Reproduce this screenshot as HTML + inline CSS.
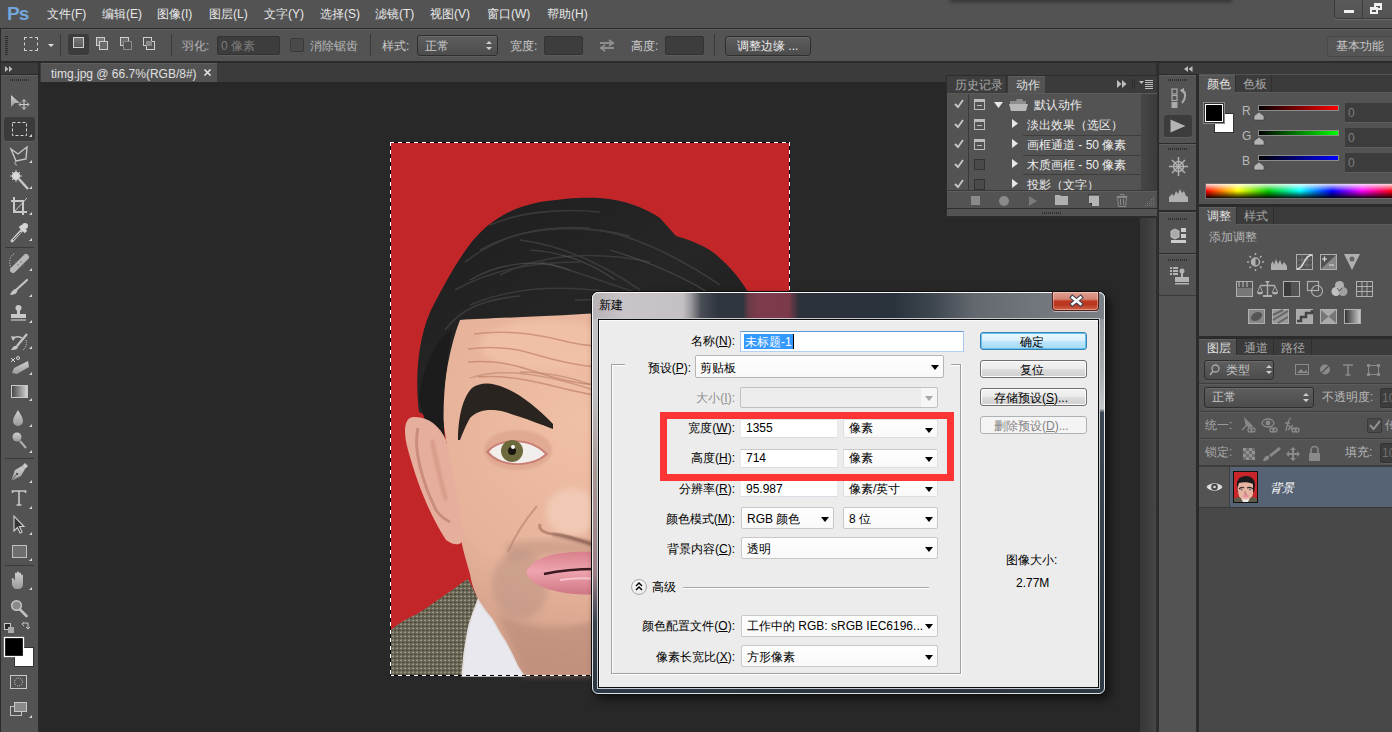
<!DOCTYPE html>
<html><head><meta charset="utf-8">
<style>
*{margin:0;padding:0;box-sizing:border-box}
html,body{width:1392px;height:732px;overflow:hidden;background:#535353;font-family:"Liberation Sans",sans-serif;font-size:12px;color:#d8d8d8}
.a{position:absolute}
.t{position:absolute;white-space:nowrap;line-height:14px}
.m{color:#e8e8e8;top:7px}
.o{color:#cacaca;top:39px}
.inp{position:absolute;background:#3d3d3d;border:1px solid #333;border-radius:2px;box-shadow:inset 0 1px 0 #3e3e3e,0 1px 0 #5c5c5c}
.btn{position:absolute;background:linear-gradient(#5e5e5e,#4c4c4c);border:1px solid #2e2e2e;border-radius:3px;box-shadow:inset 0 1px 0 #6a6a6a,0 1px 0 #5d5d5d}
svg{position:absolute;overflow:visible}
</style></head><body>
<!-- ============ MENU BAR ============ -->
<div class="a" style="left:950px;top:-6px;width:282px;height:8px;background:#2a2a2a;filter:blur(2px);opacity:.8"></div>
<div class="t" style="left:7px;top:4px;font-size:19px;line-height:20px;font-weight:bold;color:#72a6dc;letter-spacing:-0.8px">Ps</div>
<div class="t m" style="left:47px">文件(F)</div>
<div class="t m" style="left:102px">编辑(E)</div>
<div class="t m" style="left:157px">图像(I)</div>
<div class="t m" style="left:209px">图层(L)</div>
<div class="t m" style="left:264px">文字(Y)</div>
<div class="t m" style="left:320px">选择(S)</div>
<div class="t m" style="left:375px">滤镜(T)</div>
<div class="t m" style="left:430px">视图(V)</div>
<div class="t m" style="left:487px">窗口(W)</div>
<div class="t m" style="left:547px">帮助(H)</div>
<!-- window buttons -->
<div class="a" style="left:1334px;top:-3px;width:62px;height:22px;border:1px solid #3a3a3a;border-radius:0 0 0 4px;background:linear-gradient(#5a5a5a,#535353);box-shadow:0 1px 0 #6a6a6a"></div>
<div class="a" style="left:1362px;top:0;width:1px;height:18px;background:#3e3e3e"></div>
<div class="a" style="left:1344px;top:10px;width:10px;height:3px;background:#f0f0f0"></div>
<div class="a" style="left:1374px;top:3px;width:8px;height:7px;border:2px solid #f0f0f0;border-top-width:3px"></div>
<div class="a" style="left:1370px;top:7px;width:8px;height:7px;border:2px solid #f0f0f0;border-top-width:3px;background:#535353"></div>
<!-- ============ OPTIONS BAR ============ -->
<div class="a" style="left:0;top:28px;width:1392px;height:1px;background:#2a2a2a"></div>
<div class="a" style="left:0;top:29px;width:1392px;height:1px;background:#5f5f5f"></div>
<div class="a" style="left:0;top:29px;width:1px;height:33px;background:#2a2a2a"></div>
<div class="a" style="left:0;top:61px;width:1392px;height:2px;background:#2b2b2b"></div>
<!-- grip -->
<div class="a" style="left:5px;top:36px;width:3px;height:20px;background:repeating-linear-gradient(#2c2c2c 0 1px,transparent 1px 2px)"></div>
<!-- marquee icon -->
<div class="a" style="left:24px;top:37px;width:14px;height:14px;border:1px dashed #d0d0d0"></div>
<svg style="left:48px;top:44px" width="7" height="4"><path d="M0 0H6L3 3Z" fill="#e0e0e0"/></svg>
<div class="a" style="left:60px;top:34px;width:1px;height:22px;background:#3a3a3a"></div>
<!-- mode buttons -->
<div class="a" style="left:68px;top:34px;width:21px;height:21px;background:#3c3c3c;border-radius:3px;box-shadow:0 1px 0 #5c5c5c"></div>
<div class="a" style="left:73px;top:37px;width:11px;height:11px;border:1px solid #cfcfcf;background:linear-gradient(#777,#5a5a5a)"></div>
<div class="a" style="left:96px;top:37px;width:9px;height:9px;border:1px solid #cfcfcf;background:#777"></div>
<div class="a" style="left:99px;top:41px;width:9px;height:9px;border:1px solid #cfcfcf;background:#6a6a6a"></div>
<div class="a" style="left:120px;top:37px;width:9px;height:9px;border:1px solid #cfcfcf;background:#6a6a6a"></div>
<div class="a" style="left:123px;top:41px;width:9px;height:9px;border:1px solid #8a8a8a;background:#535353"></div>
<div class="a" style="left:143px;top:37px;width:9px;height:9px;border:1px solid #cfcfcf"></div>
<div class="a" style="left:146px;top:41px;width:9px;height:9px;border:1px solid #cfcfcf"></div>
<div class="a" style="left:146px;top:41px;width:6px;height:5px;background:#888"></div>
<div class="a" style="left:171px;top:34px;width:1px;height:22px;background:#3a3a3a"></div>
<div class="t o" style="left:182px;color:#b4b4b4">羽化:</div>
<div class="inp" style="left:217px;top:36px;width:63px;height:19px"></div>
<div class="t o" style="left:221px;top:39px;color:#7a7a7a">0 像素</div>
<div class="a" style="left:290px;top:38px;width:14px;height:14px;background:#4a4a4a;border:1px solid #3a3a3a;border-radius:2px"></div>
<div class="t o" style="left:310px;color:#b8b8b8">消除锯齿</div>
<div class="a" style="left:370px;top:34px;width:1px;height:22px;background:#3a3a3a"></div>
<div class="t o" style="left:382px">样式:</div>
<div class="btn" style="left:417px;top:35px;width:81px;height:21px"></div>
<div class="t o" style="left:425px">正常</div>
<svg style="left:486px;top:40px" width="6" height="11"><path d="M0 4L3 1L6 4ZM0 7L3 10L6 7Z" fill="#cfcfcf"/></svg>
<div class="t o" style="left:510px">宽度:</div>
<div class="inp" style="left:544px;top:36px;width:39px;height:19px"></div>
<svg style="left:599px;top:38px" width="16" height="14"><path d="M1 5H13M10 2L14 5L10 8M15 10H3M6 7L2 10L6 13" stroke="#8e8e8e" stroke-width="2" fill="none"/></svg>
<div class="t o" style="left:631px">高度:</div>
<div class="inp" style="left:665px;top:36px;width:39px;height:19px"></div>
<div class="a" style="left:714px;top:34px;width:1px;height:22px;background:#3a3a3a"></div>
<div class="btn" style="left:725px;top:36px;width:86px;height:20px"></div>
<div class="t o" style="left:737px;color:#ececec">调整边缘 ...</div>
<div class="btn" style="left:1327px;top:36px;width:70px;height:21px;background:#555;box-shadow:none;border-color:#484848"></div>
<div class="t o" style="left:1336px;color:#c8c8c8">基本功能</div>

<!-- ============ LEFT TOOLS ============ -->
<div class="a" style="left:0;top:63px;width:40px;height:669px;background:#2b2b2b"></div>
<div class="a" style="left:1px;top:63px;width:37px;height:11px;background:#3b3b3b"></div>
<svg style="left:5px;top:66px" width="8" height="6"><path d="M0 0L3.5 3L0 6ZM4 0L7.5 3L4 6Z" fill="#bbb"/></svg>
<div class="a" style="left:1px;top:75px;width:37px;height:657px;background:#535353;box-shadow:inset 0 1px 0 #606060"></div>
<div class="a" style="left:10px;top:79px;width:19px;height:2px;background:repeating-linear-gradient(90deg,#2e2e2e 0 1px,transparent 1px 2px)"></div>


<!-- tool icons -->
<div class="a" style="left:4px;top:117px;width:31px;height:24px;background:#3b3b3b;border-radius:3px;box-shadow:0 1px 0 #5e5e5e"></div>
<svg style="left:0;top:0" width="40" height="732" viewBox="0 0 40 732">
<defs>
<linearGradient id="tg" x1="0" y1="0" x2="0" y2="1"><stop offset="0" stop-color="#d0d0d0"/><stop offset="1" stop-color="#9a9a9a"/></linearGradient>
<linearGradient id="tg2" x1="0" y1="0" x2="1" y2="0"><stop offset="0" stop-color="#444"/><stop offset="1" stop-color="#d8d8d8"/></linearGradient>
</defs>
<g fill="#d8d8d8">
<!-- corner triangles -->
<path d="M29 137H32V134Z"/><path d="M29 163H32V160Z"/><path d="M29 189H32V186Z"/><path d="M29 215H32V212Z"/><path d="M29 241H32V238Z"/>
<path d="M29 271H32V268Z"/><path d="M29 297H32V294Z"/><path d="M29 323H32V320Z"/><path d="M29 349H32V346Z"/><path d="M29 375H32V372Z"/><path d="M29 401H32V398Z"/><path d="M29 427H32V424Z"/><path d="M29 453H32V450Z"/>
<path d="M29 483H32V480Z"/><path d="M29 509H32V506Z"/><path d="M29 535H32V532Z"/><path d="M29 561H32V558Z"/>
<path d="M29 590H32V587Z"/><path d="M29 718H32V715Z"/>
</g>
<!-- separators -->
<path d="M5 247.5H34M5 458.5H34M5 565.5H34" stroke="#3a3a3a" stroke-width="1"/>
<!-- move -->
<path d="M11 95L20 103L15 103L11 107Z" fill="url(#tg)"/>
<path d="M24 100V109M19.5 104.5H28.5" stroke="#d0d0d0" stroke-width="1.2"/><path d="M22 101.5L24 99.5L26 101.5M22 107.5L24 109.5L26 107.5M21 102.5L19 104.5L21 106.5M27 102.5L29 104.5L27 106.5" stroke="#d0d0d0" stroke-width="1" fill="none"/>
<!-- marquee -->
<rect x="12.5" y="122.5" width="14" height="13" fill="none" stroke="#d4d4d4" stroke-width="1" stroke-dasharray="3 2"/>
<!-- lasso -->
<path d="M11 149L18 154L27 147L26 159L16 161L11 149Z" fill="none" stroke="#c8c8c8" stroke-width="1.4"/><path d="M16 161C14 163 15 165 17 165" stroke="#c8c8c8" fill="none"/>
<!-- wand -->
<path d="M19 179L28 189" stroke="#c8c8c8" stroke-width="2.5"/><circle cx="16" cy="176" r="4" fill="#d8d8d8"/><path d="M16 170V182M10 176H22M12 172L20 180M20 172L12 180" stroke="#d8d8d8" stroke-width="1"/>
<!-- crop -->
<path d="M14 197V212H27M11 201H23V215" stroke="#c8c8c8" stroke-width="2" fill="none"/><path d="M14 212L27 198" stroke="#c8c8c8" stroke-width="1"/>
<!-- eyedropper -->
<path d="M12 241L22 230" stroke="#c8c8c8" stroke-width="3" stroke-linecap="round"/><path d="M20 226L26 232" stroke="#d4d4d4" stroke-width="3.5"/><circle cx="25" cy="226" r="3" fill="#d4d4d4"/><path d="M13 240L21 232" stroke="#535353" stroke-width="1"/>
<!-- heal -->
<path d="M13 270L26 257" stroke="#b8b8b8" stroke-width="6" stroke-linecap="round"/><circle cx="18" cy="265" r="0.8" fill="#777"/><circle cx="21" cy="262" r="0.8" fill="#777"/><circle cx="16" cy="262" r="0.8" fill="#777"/><circle cx="23" cy="265" r="0.8" fill="#777"/><path d="M14 254C9 256 8 266 13 270" stroke="#c8c8c8" stroke-dasharray="1 1.5" fill="none"/>
<!-- brush -->
<path d="M16 290L27 280" stroke="#c4c4c4" stroke-width="2.2" stroke-linecap="round"/><path d="M10 295C12 290 14 289 17 289C18 292 16 295 10 295Z" fill="#c4c4c4"/>
<!-- stamp -->
<circle cx="18.5" cy="308" r="3" fill="#c8c8c8"/><path d="M17 310H20V314H17Z" fill="#c8c8c8"/><path d="M11 314H26V318H11Z" fill="#c8c8c8"/><path d="M11 320H26" stroke="#c8c8c8" stroke-width="1.2"/>
<!-- history brush -->
<path d="M17 346L27 334" stroke="#c4c4c4" stroke-width="2.2"/><path d="M11 350C13 346 15 345 18 346C18 349 16 350 11 350Z" fill="#c4c4c4"/><path d="M22 338C18 336 15 336 12 339" stroke="#c4c4c4" stroke-width="1.5" fill="none"/><path d="M11 336L13 341L16 337Z" fill="#c4c4c4"/><path d="M26 340C27 344 26 348 23 350" stroke="#c4c4c4" stroke-dasharray="1 1" fill="none"/>
<!-- eraser -->
<path d="M14 368L28 361L29 367L17 374L12 373Z" fill="url(#tg)"/><path d="M11 358L15 362M15 358L11 362" stroke="#d4d4d4" stroke-width="1"/><circle cx="18" cy="358" r="1.5" fill="none" stroke="#d4d4d4"/>
<!-- gradient -->
<rect x="11.5" y="385.5" width="16" height="12" fill="url(#tg2)" stroke="#c8c8c8"/>
<!-- blur drop -->
<path d="M18 410C15 415 13 418 13 421A5 5 0 0 0 23 421C23 418 21 415 18 410Z" fill="url(#tg)"/>
<!-- dodge -->
<circle cx="17" cy="437" r="4.5" fill="url(#tg)"/><path d="M20 441L26 448" stroke="#b0b0b0" stroke-width="2"/>
<!-- pen -->
<path d="M11 481L15 470L22 466L25 469L21 476Z" fill="url(#tg)"/><path d="M22 466L25 463L28 466L25 469Z" fill="#c8c8c8"/><circle cx="17" cy="474" r="1" fill="#333"/><path d="M11 481L16 475" stroke="#333" stroke-width="0.6"/>
<!-- type -->
<path d="M12.5 493V491H25.5V493M19 491V505M16.5 505H21.5" stroke="#c8c8c8" stroke-width="1.6" fill="none"/>
<!-- path select -->
<path d="M14 516V531L17.5 527.5L20 533L22 532L19.5 526.5H24Z" fill="#333" stroke="#d0d0d0" stroke-width="1.1"/>
<!-- shape -->
<rect x="12.5" y="545.5" width="14" height="12" fill="#6e6e6e" stroke="#c0c0c0"/>
<!-- hand -->
<path d="M12 581C11 578 13 577 14 579L15 581V574C15 572 17 572 17 574V580V573C17 571 19 571 19 573V580V574C19 572 21 572 21 574V581V576C21 574 23 574 23 576V584C23 587 21 589 18 589H16C14 589 13 587 12 585Z" fill="url(#tg)"/>
<!-- zoom -->
<circle cx="16.5" cy="605.5" r="4.8" fill="#8a8a8a" stroke="#c8c8c8" stroke-width="1.5"/><path d="M20 609.5L26.5 616" stroke="#c0c0c0" stroke-width="2.6" stroke-linecap="round"/>
<!-- small swatches -->
<rect x="4.5" y="623.5" width="6" height="6" fill="#2a2a2a" stroke="#c8c8c8"/><rect x="8" y="627" width="6" height="6" fill="#aaa"/>
<path d="M23 623H28V628" stroke="#c8c8c8" fill="none"/><path d="M22 624L24 622M22 624L24 626M28 629L26 627M28 629L30 627" stroke="#c8c8c8" fill="none"/>
<!-- fg bg -->
<rect x="14.5" y="647.5" width="19" height="19" fill="#fff" stroke="#333"/>
<rect x="4.5" y="637.5" width="19" height="19" fill="#000" stroke="#fff" stroke-width="1.3"/>
<!-- quick mask -->
<rect x="10.5" y="675.5" width="16" height="13" fill="none" stroke="#c8c8c8"/><circle cx="18.5" cy="682" r="4" fill="none" stroke="#d8d8d8" stroke-dasharray="1 1.2"/>
<!-- screen mode -->
<rect x="10.5" y="706.5" width="11" height="9" fill="#535353" stroke="#c0c0c0"/><rect x="14.5" y="702.5" width="12" height="9" fill="#8a8a8a" stroke="#c8c8c8"/>
</svg>

<!-- ============ TAB STRIP + CANVAS ============ -->
<div class="a" style="left:40px;top:63px;width:1118px;height:19px;background:#3b3b3b"></div>
<div class="a" style="left:41px;top:63px;width:176px;height:19px;background:#535353;box-shadow:inset 0 1px 0 #5f5f5f"></div>
<div class="t" style="left:51px;top:67px;color:#e0e0e0;font-size:12px">timg.jpg @ 66.7%(RGB/8#)</div>
<svg style="left:204px;top:69px" width="7" height="7"><path d="M0.5 0.5L6.5 6.5M6.5 0.5L0.5 6.5" stroke="#e8e8e8" stroke-width="1.6"/></svg>
<div class="a" style="left:40px;top:82px;width:1118px;height:650px;background:#282828"></div>

<!-- ============ PHOTO ============ -->
<svg style="left:391px;top:143px" width="398" height="532" viewBox="391 143 398 532">
<defs>
<radialGradient id="skin" cx="0.4" cy="0.3" r="0.8"><stop offset="0" stop-color="#f0c0a6"/><stop offset="0.55" stop-color="#e6b29a"/><stop offset="1" stop-color="#c4927e"/></radialGradient>
<linearGradient id="hairg" x1="0" y1="0" x2="1" y2="1"><stop offset="0" stop-color="#1e1e1e"/><stop offset="0.5" stop-color="#262626"/><stop offset="1" stop-color="#161616"/></linearGradient>
<pattern id="tweed" width="4" height="4" patternUnits="userSpaceOnUse"><rect width="4" height="4" fill="#6a6656"/><rect width="2" height="1" fill="#9a9480"/><rect x="2" y="2" width="2" height="1" fill="#45423a"/><rect x="1" y="3" width="1" height="1" fill="#8a8470"/></pattern>
<linearGradient id="lip" x1="0" y1="0" x2="0" y2="1"><stop offset="0" stop-color="#d9808c"/><stop offset="0.45" stop-color="#eea4ae"/><stop offset="1" stop-color="#cf7684"/></linearGradient>
<filter id="bl"><feGaussianBlur stdDeviation="3"/></filter>
<filter id="bl1"><feGaussianBlur stdDeviation="1"/></filter><filter id="bl05"><feGaussianBlur stdDeviation="0.6"/></filter>
</defs>
<rect x="391" y="143" width="398" height="532" fill="#c32628"/>
<path d="M478 595 L600 560 L600 676 L470 676 Z" fill="#c89a88"/>
<!-- hair -->
<path d="M419 412 C414 370 420 330 434 304 C448 278 465 245 486 227 C505 212 520 206 540 202 C565 198 585 197 600 198 C625 200 645 208 660 218 L676 236 C700 243 712 250 722 260 C735 272 745 285 752 300 L770 430 L600 430 L470 440 Z" fill="url(#hairg)"/>
<g stroke="#4a4a4a" stroke-width="1.6" fill="none" opacity="0.6" filter="url(#bl05)">
<path d="M465 262 C500 235 540 225 590 228"/><path d="M480 250 C520 228 570 222 630 236"/><path d="M500 275 C540 255 590 250 650 262"/>
<path d="M455 290 C490 270 530 262 580 262"/><path d="M520 240 C560 245 600 262 640 290"/><path d="M540 262 C575 270 610 285 660 300"/>
<path d="M470 305 C510 288 560 285 610 292"/><path d="M600 230 C640 238 680 258 720 285"/><path d="M575 300 C620 300 660 290 700 300"/>
<path d="M445 330 C460 310 480 300 520 296"/><path d="M490 225 C520 212 560 208 600 212"/>
</g>
<g stroke="#5a5a5a" stroke-width="1.2" fill="none" opacity="0.6" filter="url(#bl05)">
<path d="M530 250 C560 252 590 262 615 280"/><path d="M470 280 C500 262 540 258 570 270"/><path d="M610 250 C650 262 690 280 720 300"/>
</g>
<!-- face skin -->
<path d="M460 320 C490 318 540 317 600 313 L792 320 L792 676 L524 676 C515 655 510 648 505 641 C500 632 495 625 492 619 C485 612 480 606 478 600 C474 590 471 582 470 574 C466 560 463 550 462 544 C455 500 446 440 442 412 C444 380 450 345 460 320 Z" fill="url(#skin)"/>
<!-- forehead light -->
<ellipse cx="545" cy="345" rx="65" ry="24" fill="#f2c4aa" opacity="0.7" filter="url(#bl)"/>
<g stroke="#c2806a" stroke-width="1.5" fill="none" opacity="0.7" filter="url(#bl05)">
<path d="M474 334 C500 330 530 333 560 340 C575 344 590 346 600 346"/>
<path d="M468 349 C490 346 510 347 530 353 C550 359 575 366 600 367"/>
<path d="M468 362 C490 360 510 363 530 370 C550 377 575 384 600 385"/>
<path d="M478 377 C500 375 520 378 545 384 C565 389 585 394 600 396"/>
</g>
<!-- sideburn -->
<path d="M419 400 C420 380 432 340 452 330 C447 360 442 400 444 430 C446 450 448 462 450 470 L440 470 C436 450 432 430 426 424 Z" fill="#1c1c1c"/>
<!-- eyebrow -->
<path d="M458 440 C458 420 462 398 472 388 C480 382 492 382 505 388 C520 394 538 408 553 424 L553 429 C540 424 525 418 505 412 C490 408 478 410 470 418 C466 425 463 432 460 440 Z" fill="#2a2420"/>
<path d="M470 378 C500 368 540 372 600 392 M520 372 C550 372 580 380 600 388" stroke="#c08a74" stroke-width="1.3" fill="none" opacity="0.7"/>
<!-- ear -->
<path d="M413 417 C404 418 403 432 408 450 C418 486 430 515 446 540 C454 546 462 546 464 538 C460 505 452 470 446 440 C440 426 428 416 413 417 Z" fill="#e6ae9c"/>
<path d="M418 428 C413 448 422 482 436 510 C440 516 446 520 450 522" stroke="#b87868" stroke-width="3" fill="none" opacity="0.6" filter="url(#bl05)"/><path d="M432 440 C436 460 440 480 446 500" stroke="#c88a78" stroke-width="4" fill="none" opacity="0.5" filter="url(#bl1)"/>
<!-- under-eye / eye socket -->
<ellipse cx="518" cy="450" rx="34" ry="20" fill="#d89c88" opacity="0.55" filter="url(#bl1)"/>
<path d="M486 452 C495 438 530 434 548 454 C535 468 500 470 486 452 Z" fill="#c87e74"/>
<path d="M489 452 C498 440 528 437 545 454 C532 466 502 467 489 452 Z" fill="#f2eeec"/>
<circle cx="512" cy="451" r="11" fill="#6c6a3c"/>
<circle cx="512" cy="451" r="4" fill="#1a1410"/>
<circle cx="513" cy="447" r="2" fill="#fff"/>
<!-- nose -->
<ellipse cx="572" cy="512" rx="26" ry="24" fill="#f2cab6" opacity="0.9" filter="url(#bl)"/>
<path d="M540 524 C538 530 545 534 556 534 C570 536 585 542 596 546" stroke="#9a6658" stroke-width="3" fill="none" opacity="0.55" filter="url(#bl05)"/>
<path d="M552 536 C570 540 585 545 596 548 L596 542 C580 538 565 534 552 534 Z" fill="#6a4a40" opacity="0.45" filter="url(#bl1)"/>
<path d="M537 506 C525 520 515 535 508 552" stroke="#b88070" stroke-width="2" fill="none" opacity="0.6" filter="url(#bl05)"/>
<!-- stubble / jaw shadow -->
<path d="M505 545 C530 536 570 540 596 545 L596 556 C560 552 530 556 510 562 Z" fill="#a88070" opacity="0.35" filter="url(#bl)"/>
<ellipse cx="520" cy="585" rx="28" ry="35" fill="#bc9484" opacity="0.55" filter="url(#bl)"/>
<path d="M497 614 C530 630 570 630 596 620 L596 676 L524 676 C515 650 505 630 497 614 Z" fill="#b88a78" opacity="0.6" filter="url(#bl)"/>
<!-- lips -->
<path d="M527 570 C535 556 560 550 596 552 L596 594 C575 596 552 592 538 585 C530 580 525 576 527 570 Z" fill="url(#lip)"/>
<path d="M544 574 C558 571 578 569 596 569" stroke="#3a1a20" stroke-width="2.6" fill="none"/>
<path d="M560 580 C572 578 585 578 596 579" stroke="#f8d0d6" stroke-width="2" fill="none" opacity="0.8"/>
<!-- jacket -->
<path d="M391 630 C400 622 410 617 417 614 C430 606 443 596 455 588 C460 584 464 581 468 579 C472 586 476 594 478 600 C474 610 470 620 468 630 C465 645 463 660 462 676 L391 676 Z" fill="url(#tweed)"/>
<!-- shirt collar -->
<path d="M478 600 C483 608 487 614 492 619 C497 628 501 636 505 641 C510 650 515 660 518 667 L524 676 L462 676 C463 660 465 645 468 630 C470 620 474 610 478 600 Z" fill="#e8e8ee" stroke="#e0dcdc" stroke-width="1.5"/>
</svg>
<!-- marching ants -->
<div class="a" style="left:390px;top:142px;width:400px;height:1px;background:repeating-linear-gradient(90deg,#fff 0 4px,#000 4px 8px)"></div>
<div class="a" style="left:390px;top:675px;width:400px;height:1px;background:repeating-linear-gradient(90deg,#fff 0 4px,#000 4px 8px)"></div>
<div class="a" style="left:390px;top:142px;width:1px;height:534px;background:repeating-linear-gradient(#fff 0 4px,#000 4px 8px)"></div>
<div class="a" style="left:789px;top:142px;width:1px;height:534px;background:repeating-linear-gradient(#fff 0 4px,#000 4px 8px)"></div>
<!-- right canvas lighter column -->
<div class="a" style="left:1140px;top:82px;width:16px;height:650px;background:linear-gradient(90deg,#383838,#3c3c3c 40%,#464646)"></div>
<div class="a" style="left:1156px;top:63px;width:3px;height:669px;background:#2e2e2e"></div>


<!-- ============ ACTIONS FLOATING PANEL ============ -->
<style>
.pt{position:absolute;white-space:nowrap;line-height:14px;font-size:12px;color:#d4d4d4}
.ck{position:absolute;width:9px;height:8px}
</style>
<div class="a" style="left:946px;top:75px;width:211px;height:143px;background:#2c2c2c"></div>
<div class="a" style="left:947px;top:76px;width:210px;height:17px;background:#3b3b3b"></div>
<div class="a" style="left:947px;top:76px;width:60px;height:16px;background:#3e3e3e;box-shadow:inset -1px 0 0 #2c2c2c"></div>
<div class="pt" style="left:955px;top:78px;color:#a8a8a8">历史记录</div>
<div class="a" style="left:1008px;top:76px;width:37px;height:18px;background:#535353;box-shadow:inset 0 1px 0 #5e5e5e"></div>
<div class="pt" style="left:1016px;top:78px;color:#e0e0e0">动作</div>
<svg style="left:1117px;top:80px" width="10" height="8"><path d="M0 0L4.5 4L0 8ZM5 0L9.5 4L5 8Z" fill="#bdbdbd"/></svg>
<div class="a" style="left:1132px;top:79px;width:1px;height:10px;background:#2e2e2e"></div>
<div class="a" style="left:1134px;top:79px;width:1px;height:10px;background:#2e2e2e"></div>
<svg style="left:1139px;top:80px" width="15" height="9"><path d="M0 1H5L2.5 4Z" fill="#bdbdbd"/><path d="M6 0.5H14M6 2.5H14M6 4.5H14M6 6.5H14M6 8.5H14" stroke="#bdbdbd" stroke-width="1"/></svg>
<div class="a" style="left:947px;top:93px;width:210px;height:1px;background:#5b5b5b"></div>
<div class="a" style="left:947px;top:94px;width:210px;height:97px;background:#535353"></div>
<div class="a" style="left:968px;top:94px;width:1px;height:97px;background:#3a3a3a"></div>
<div class="a" style="left:1141px;top:94px;width:16px;height:97px;background:linear-gradient(90deg,#464646,#3c3c3c)"></div>
<div class="a" style="left:1023px;top:135px;width:118px;height:1px;background:#3e3e3e"></div>
<div class="a" style="left:1023px;top:155px;width:118px;height:1px;background:#3e3e3e"></div>
<div class="a" style="left:1023px;top:174px;width:118px;height:1px;background:#3e3e3e"></div>
<!-- checks -->
<svg style="left:954px;top:99px" width="10" height="90"><g fill="none" stroke="#c8c8c8" stroke-width="1.8"><path d="M1 5L4 8L9 1"/><path d="M1 25L4 28L9 21"/><path d="M1 45L4 48L9 41"/><path d="M1 65L4 68L9 61"/><path d="M1 85L4 88L9 81"/></g></svg>
<!-- dialog toggles -->
<div class="a" style="left:974px;top:99px;width:11px;height:11px;border:1px solid #bcbcbc;box-shadow:inset 0 2px 0 #bcbcbc"></div><div class="a" style="left:977px;top:105px;width:5px;height:1px;background:#bcbcbc"></div>
<div class="a" style="left:974px;top:119px;width:11px;height:11px;border:1px solid #bcbcbc;box-shadow:inset 0 2px 0 #bcbcbc"></div><div class="a" style="left:977px;top:125px;width:5px;height:1px;background:#bcbcbc"></div>
<div class="a" style="left:974px;top:139px;width:11px;height:11px;border:1px solid #bcbcbc;box-shadow:inset 0 2px 0 #bcbcbc"></div><div class="a" style="left:977px;top:145px;width:5px;height:1px;background:#bcbcbc"></div>
<div class="a" style="left:974px;top:159px;width:11px;height:11px;border:1px solid #333;background:#4a4a4a"></div>
<div class="a" style="left:974px;top:179px;width:11px;height:11px;border:1px solid #333;background:#4a4a4a"></div>
<svg style="left:994px;top:102px" width="10" height="7"><path d="M0 0H9L4.5 6Z" fill="#e8e8e8"/></svg>
<svg style="left:1009px;top:98px" width="20" height="14"><path d="M1 3H7L8 1H13L14 3H17V6H1Z" fill="#8e8e8e"/><path d="M0 6H19L17 13H2Z" fill="#b8b8b8"/></svg>
<div class="pt" style="left:1034px;top:98px;color:#ececec">默认动作</div>
<svg style="left:1012px;top:119px" width="7" height="70"><g fill="#e8e8e8"><path d="M0 0L6 4.5L0 9Z"/><path d="M0 20L6 24.5L0 29Z"/><path d="M0 40L6 44.5L0 49Z"/><path d="M0 60L6 64.5L0 69Z"/></g></svg>
<div class="pt" style="left:1027px;top:118px;color:#ececec">淡出效果（选区）</div>
<div class="pt" style="left:1027px;top:138px;color:#ececec">画框通道 - 50 像素</div>
<div class="pt" style="left:1027px;top:158px;color:#ececec">木质画框 - 50 像素</div>
<div class="a" style="left:947px;top:178px;width:194px;height:13px;overflow:hidden"><div class="pt" style="left:80px;top:0px;color:#ececec">投影（文字）</div></div>
<!-- bottom toolbar -->
<div class="a" style="left:947px;top:190px;width:210px;height:19px;background:#535353;box-shadow:inset 0 1px 0 #3a3a3a,inset 0 2px 0 #5e5e5e,inset 0 -1px 0 #2e2e2e"></div>
<div class="a" style="left:971px;top:196px;width:9px;height:9px;background:#8a8a8a"></div>
<div class="a" style="left:999px;top:196px;width:10px;height:10px;border-radius:50%;background:#8a8a8a"></div>
<svg style="left:1029px;top:196px" width="9" height="10"><path d="M0 0L8 5L0 10Z" fill="#7a7a7a"/></svg>
<svg style="left:1055px;top:194px" width="14" height="11"><path d="M0 1H5L6 2H13V11H0Z" fill="#b0b0b0"/></svg>
<svg style="left:1088px;top:195px" width="12" height="12"><path d="M1 0H11V11H4L1 8Z" fill="#b4b4b4"/><path d="M1 8H4V11Z" fill="#2a2a2a"/><path d="M0 0H11" stroke="#2a2a2a" stroke-width="1"/></svg>
<svg style="left:1116px;top:194px" width="12" height="13"><path d="M0.5 2.5H11.5M4 0.5H8V2.5M1.5 3.5H10.5L9.5 12.5H2.5Z" stroke="#8a8a8a" stroke-width="1" fill="none"/><path d="M4.5 5V11M7.5 5V11" stroke="#8a8a8a"/></svg>
<svg style="left:1145px;top:197px" width="10" height="10"><g fill="#7a7a7a"><rect x="8" y="0" width="1" height="1"/><rect x="6" y="2" width="1" height="1"/><rect x="8" y="2" width="1" height="1"/><rect x="4" y="4" width="1" height="1"/><rect x="6" y="4" width="1" height="1"/><rect x="8" y="4" width="1" height="1"/><rect x="2" y="6" width="1" height="1"/><rect x="4" y="6" width="1" height="1"/><rect x="6" y="6" width="1" height="1"/><rect x="8" y="6" width="1" height="1"/><rect x="0" y="8" width="1" height="1"/><rect x="2" y="8" width="1" height="1"/><rect x="4" y="8" width="1" height="1"/><rect x="6" y="8" width="1" height="1"/><rect x="8" y="8" width="1" height="1"/></g></svg>
<div class="a" style="left:947px;top:209px;width:210px;height:7px;background:#535353"></div>
<div class="a" style="left:1042px;top:212px;width:19px;height:2px;background:repeating-linear-gradient(90deg,#2e2e2e 0 1px,transparent 1px 2px)"></div>

<!-- ============ NARROW ICON COLUMN ============ -->
<div class="a" style="left:1158px;top:63px;width:41px;height:669px;background:#2b2b2b"></div>
<div class="a" style="left:1159px;top:63px;width:234px;height:11px;background:#3b3b3b"></div>
<svg style="left:1184px;top:66px" width="9" height="6"><path d="M4 0L0 3L4 6ZM8.5 0L4.5 3L8.5 6Z" fill="#bbb"/></svg>
<div class="a" style="left:1159px;top:75px;width:37px;height:68px;background:#535353;box-shadow:inset 0 1px 0 #5f5f5f"></div>
<div class="a" style="left:1168px;top:79px;width:19px;height:2px;background:repeating-linear-gradient(90deg,#2e2e2e 0 1px,transparent 1px 2px)"></div>
<svg style="left:1171px;top:88px" width="18" height="20"><rect x="1" y="1" width="5" height="5" fill="none" stroke="#aaa" stroke-width="1.2"/><rect x="1" y="7.5" width="5" height="5" fill="none" stroke="#aaa" stroke-width="1.2"/><rect x="0.5" y="14" width="6" height="6" fill="#aaa"/><path d="M10 3H12C15 4 15 11 11 15" stroke="#aaa" stroke-width="2" fill="none"/><path d="M9 2L13 0V6Z" fill="#aaa"/></svg>
<div class="a" style="left:1164px;top:115px;width:28px;height:22px;background:#3c3c3c;border-radius:3px;box-shadow:0 1px 0 #5e5e5e"></div>
<svg style="left:1170px;top:119px" width="16" height="14"><path d="M0.5 0.5L15.5 7L0.5 13.5Z" fill="#b4b4b4"/></svg>
<div class="a" style="left:1159px;top:144px;width:37px;height:66px;background:#535353;box-shadow:inset 0 1px 0 #5f5f5f"></div>
<div class="a" style="left:1168px;top:148px;width:19px;height:2px;background:repeating-linear-gradient(90deg,#2e2e2e 0 1px,transparent 1px 2px)"></div>
<svg style="left:1169px;top:157px" width="19" height="19"><g stroke="#b0b0b0" stroke-width="1.5" fill="none"><circle cx="9.5" cy="9.5" r="5"/><path d="M9.5 0V19M0 9.5H19M3 3L16 16M16 3L3 16"/></g></svg>
<svg style="left:1169px;top:188px" width="19" height="14"><path d="M0 14V9L3 6L5 8L7 3L9 6L11 1L13 5L15 3L17 8L19 9V14Z" fill="#b0b0b0"/></svg>
<div class="a" style="left:1159px;top:212px;width:37px;height:41px;background:#535353;box-shadow:inset 0 1px 0 #5f5f5f"></div>
<div class="a" style="left:1168px;top:218px;width:19px;height:2px;background:repeating-linear-gradient(90deg,#2e2e2e 0 1px,transparent 1px 2px)"></div>
<svg style="left:1170px;top:227px" width="17" height="17"><path d="M1 4L5 2L9 4V10L5 12L1 10Z" fill="#aaa" stroke="#ccc" stroke-width="0.8"/><rect x="11" y="1" width="5" height="4" fill="#ccc"/><rect x="11" y="7" width="5" height="4" fill="#ccc"/><rect x="1" y="13" width="15" height="3" fill="#ccc"/></svg>
<div class="a" style="left:1159px;top:254px;width:37px;height:478px;background:#535353;box-shadow:inset 0 1px 0 #5f5f5f"></div>
<div class="a" style="left:1168px;top:259px;width:19px;height:2px;background:repeating-linear-gradient(90deg,#2e2e2e 0 1px,transparent 1px 2px)"></div>
<svg style="left:1170px;top:267px" width="19" height="18"><g fill="#b4b4b4"><rect x="0" y="0" width="2" height="2"/><rect x="0" y="3" width="2" height="2"/><rect x="0" y="6" width="2" height="2"/><rect x="3" y="0" width="5" height="2"/><rect x="3" y="3" width="5" height="2"/><rect x="3" y="6" width="5" height="2"/><circle cx="12" cy="4" r="2.5"/><rect x="11" y="5" width="2" height="5"/><rect x="5" y="10" width="14" height="5"/><rect x="5" y="16" width="14" height="1.5"/></g></svg>
<div class="a" style="left:1159px;top:295px;width:37px;height:1px;background:#3a3a3a"></div>

<!-- ============ RIGHT PANELS ============ -->
<div class="a" style="left:1199px;top:75px;width:193px;height:130px;background:#535353"></div>
<div class="a" style="left:1199px;top:75px;width:193px;height:17px;background:#3b3b3b"></div>
<div class="a" style="left:1199px;top:75px;width:36px;height:18px;background:#535353;box-shadow:inset 0 1px 0 #5f5f5f"></div>
<div class="pt" style="left:1207px;top:77px;color:#e0e0e0">颜色</div>
<div class="a" style="left:1235px;top:75px;width:1px;height:17px;background:#2e2e2e"></div>
<div class="pt" style="left:1243px;top:77px;color:#a8a8a8">色板</div>
<div class="a" style="left:1271px;top:75px;width:1px;height:17px;background:#2e2e2e"></div>
<div class="a" style="left:1235px;top:92px;width:157px;height:1px;background:#5b5b5b"></div>
<div class="a" style="left:1214px;top:113px;width:20px;height:20px;background:#fff;border:1px solid #333"></div>
<div class="a" style="left:1203px;top:102px;width:22px;height:22px;border:1px solid #8a8a8a;background:#000;box-shadow:inset 0 0 0 1px #333,inset 0 0 0 2px #fff"></div>
<div class="pt" style="left:1242px;top:104px;color:#b8b8b8">R</div>
<div class="pt" style="left:1242px;top:129px;color:#b8b8b8">G</div>
<div class="pt" style="left:1242px;top:154px;color:#b8b8b8">B</div>
<div class="a" style="left:1258px;top:105px;width:81px;height:6px;border:1px solid #8c8c8c;background:linear-gradient(90deg,#000,#f00)"></div>
<div class="a" style="left:1258px;top:130px;width:81px;height:6px;border:1px solid #8c8c8c;background:linear-gradient(90deg,#000,#0f0)"></div>
<div class="a" style="left:1258px;top:155px;width:81px;height:6px;border:1px solid #8c8c8c;background:linear-gradient(90deg,#000,#00f)"></div>
<svg style="left:1253px;top:112px" width="12" height="60"><g fill="#b4b4b4" stroke="#3a3a3a" stroke-width="0.6"><path d="M6 0L11 4V8H1V4Z"/><path d="M6 25L11 29V33H1V29Z"/><path d="M6 50L11 54V58H1V54Z"/></g></svg>
<div class="a" style="left:1345px;top:103px;width:50px;height:19px;background:#3c3c3c;box-shadow:0 1px 0 #5e5e5e"></div>
<div class="a" style="left:1345px;top:128px;width:50px;height:19px;background:#3c3c3c;box-shadow:0 1px 0 #5e5e5e"></div>
<div class="a" style="left:1345px;top:153px;width:50px;height:19px;background:#3c3c3c;box-shadow:0 1px 0 #5e5e5e"></div>
<div class="pt" style="left:1348px;top:106px;color:#7e7e7e">0</div>
<div class="pt" style="left:1348px;top:131px;color:#7e7e7e">0</div>
<div class="pt" style="left:1348px;top:156px;color:#7e7e7e">0</div>
<div class="a" style="left:1205px;top:183px;width:190px;height:16px;border:1px solid #6e6e6e;background:linear-gradient(rgba(255,255,255,.85) 0,rgba(255,255,255,0) 50%,rgba(0,0,0,0) 50%,rgba(0,0,0,.9) 100%),linear-gradient(90deg,#f00 0,#ff0 17%,#0c0 33%,#0ff 50%,#00f 67%,#f0f 83%,#f00 100%)"></div>
<div class="a" style="left:1199px;top:204px;width:193px;height:3px;background:#2b2b2b"></div>
<!-- adjustments -->
<div class="a" style="left:1199px;top:207px;width:193px;height:129px;background:#535353"></div>
<div class="a" style="left:1199px;top:207px;width:193px;height:17px;background:#3b3b3b"></div>
<div class="a" style="left:1199px;top:207px;width:37px;height:18px;background:#535353;box-shadow:inset 0 1px 0 #5f5f5f"></div>
<div class="pt" style="left:1207px;top:209px;color:#e0e0e0">调整</div>
<div class="a" style="left:1236px;top:207px;width:1px;height:17px;background:#2e2e2e"></div>
<div class="pt" style="left:1244px;top:209px;color:#a8a8a8">样式</div>
<div class="a" style="left:1273px;top:207px;width:1px;height:17px;background:#2e2e2e"></div>
<div class="a" style="left:1236px;top:224px;width:156px;height:1px;background:#5b5b5b"></div>
<div class="pt" style="left:1209px;top:230px;color:#b4b4b4">添加调整</div>
<svg style="left:1236px;top:253px" width="140" height="72">
<g fill="#b0b0b0" stroke="#b0b0b0">
<!-- row1 -->
<circle cx="19.5" cy="9" r="4" fill="none" stroke-width="1.5"/><path d="M19.5 5V13A4 4 0 0 1 19.5 5Z" stroke="none"/>
<path d="M19.5 0V2M19.5 16V18M11 9H13M26 9H28M13.5 3L15 4.5M24 13.5L25.5 15M25.5 3L24 4.5M15 13.5L13.5 15" stroke-width="1.5"/>
<path d="M35 17V11L37 8L38 12L40 6L42 11L44 7L46 12L48 9L51 13V17Z" stroke="none"/>
<rect x="60.5" y="1.5" width="16" height="15" fill="none" stroke-width="1"/><path d="M60 7H77M60 12H77M66 1V17M71 1V17" stroke-width="0.6" stroke="#888"/><path d="M61 16C68 16 68 2 76 2" fill="none" stroke-width="1.5" stroke="#ddd"/>
<rect x="84.5" y="1.5" width="16" height="15" fill="none" stroke-width="1"/><path d="M85 16L100 2V16Z" stroke="none" fill="#888"/><path d="M86 6H91M88.5 3.5V8.5M93 12H98" stroke-width="1.2" stroke="#e0e0e0"/>
<path d="M108 1H124L116 17Z" stroke="none"/><circle cx="116" cy="6" r="2.5" fill="#666" stroke="none"/>
<!-- row2 -->
<rect x="0.5" y="28.5" width="16" height="15" fill="none" stroke-width="1"/><path d="M1 35H16V43H1Z" stroke="none" fill="#777"/><path d="M3 29V34M7 29V34M11 29V34" stroke-width="1.2"/>
<path d="M31.5 29V43M24 32.5H39" stroke-width="1.3" fill="none"/><path d="M29 28H34L31.5 31Z" stroke="none"/><path d="M24 33L21.5 39M24 33L26.5 39M39 33L36.5 39M39 33L41.5 39" stroke-width="0.9" fill="none"/><path d="M21 39A3 2.5 0 0 0 27 39ZM36 39A3 2.5 0 0 0 42 39Z" stroke="none"/><path d="M27 43H36" stroke-width="2"/>
<rect x="47.5" y="28.5" width="16" height="15" fill="none" stroke-width="1"/><rect x="48" y="29" width="7" height="14" fill="#3a3a3a" stroke="none"/>
<rect x="71.5" y="28.5" width="11" height="9" fill="none" stroke-width="1.2"/><circle cx="81" cy="38" r="5.5" fill="none" stroke-width="1.2"/>
<circle cx="103.5" cy="32.5" r="4.5" stroke="none"/><circle cx="100" cy="38.5" r="4.5" stroke="none" fill="#c0c0c0"/><circle cx="107" cy="38.5" r="4.5" stroke="none" fill="#a0a0a0"/><path d="M101 35L103.5 38L106 35" stroke="#555" stroke-width="1" fill="none"/>
<rect x="120.5" y="28.5" width="16" height="15" fill="none" stroke-width="1"/><path d="M120 33.5H137M120 38.5H137M126 28V44M131 28V44" stroke-width="1"/>
<!-- row3 -->
<rect x="12.5" y="56.5" width="16" height="14" fill="#888" stroke-width="1"/><ellipse cx="20.5" cy="63.5" rx="6" ry="4" fill="#555" stroke="none" transform="rotate(-30 20.5 63.5)"/>
<rect x="36.5" y="56.5" width="16" height="14" fill="#999" stroke-width="1"/><path d="M37 62L47 57M37 67L52 58M42 70L52 64" stroke="#666" stroke-width="2"/>
<rect x="60.5" y="56.5" width="16" height="14" fill="#aaa" stroke-width="1"/><path d="M61 68L65 68L65 64L70 64L70 60L76 60L76 57" fill="none" stroke="#444" stroke-width="2.5"/>
<rect x="84.5" y="56.5" width="16" height="14" fill="#aaa" stroke-width="1"/><path d="M85 57L92.5 63.5L85 70ZM100 57L92.5 63.5L100 70Z" stroke="none" fill="#777"/>
<rect x="108.5" y="56.5" width="16" height="14" fill="none" stroke-width="1"/>
</g>
<defs><linearGradient id="gm" x1="0" x2="1"><stop offset="0" stop-color="#333"/><stop offset="1" stop-color="#c8c8c8"/></linearGradient></defs>
<rect x="109" y="57" width="15" height="13" fill="url(#gm)"/>
</svg>
<div class="a" style="left:1199px;top:336px;width:193px;height:3px;background:#2b2b2b"></div>
<!-- layers -->
<div class="a" style="left:1199px;top:339px;width:193px;height:393px;background:#535353"></div>
<div class="a" style="left:1199px;top:339px;width:193px;height:16px;background:#3b3b3b"></div>
<div class="a" style="left:1199px;top:339px;width:37px;height:17px;background:#535353;box-shadow:inset 0 1px 0 #5f5f5f"></div>
<div class="pt" style="left:1207px;top:341px;color:#e0e0e0">图层</div>
<div class="a" style="left:1236px;top:339px;width:1px;height:16px;background:#2e2e2e"></div>
<div class="pt" style="left:1244px;top:341px;color:#a8a8a8">通道</div>
<div class="a" style="left:1273px;top:339px;width:1px;height:16px;background:#2e2e2e"></div>
<div class="pt" style="left:1281px;top:341px;color:#a8a8a8">路径</div>
<div class="a" style="left:1311px;top:339px;width:1px;height:16px;background:#2e2e2e"></div>
<div class="a" style="left:1236px;top:355px;width:156px;height:1px;background:#5b5b5b"></div>
<div class="btn" style="left:1204px;top:360px;width:70px;height:20px"></div>
<svg style="left:1209px;top:364px" width="11" height="12"><circle cx="6.5" cy="4.5" r="3.5" fill="none" stroke="#aaa" stroke-width="1.3"/><path d="M4 7L1 11" stroke="#aaa" stroke-width="1.5"/></svg>
<div class="pt" style="left:1226px;top:363px;color:#c8c8c8">类型</div>
<svg style="left:1266px;top:364px" width="6" height="11"><path d="M0 4L3 1L6 4ZM0 7L3 10L6 7Z" fill="#cfcfcf"/></svg>
<svg style="left:1295px;top:364px" width="90" height="12"><rect x="0.5" y="0.5" width="13" height="10" fill="none" stroke="#8a8a8a"/><path d="M2 9L6 5L9 8L11 6L13 9Z" fill="#8a8a8a"/><circle cx="30" cy="5.5" r="5" fill="#8a8a8a"/><path d="M26.5 9L33.5 2" stroke="#535353" stroke-width="1.5"/><path d="M48 1H58M53 1V11M50.5 11H55.5" stroke="#8a8a8a" stroke-width="1.6"/><rect x="73.5" y="1.5" width="10" height="9" fill="none" stroke="#8a8a8a"/><rect x="72" y="0" width="3" height="3" fill="#8a8a8a"/><rect x="82" y="0" width="3" height="3" fill="#8a8a8a"/><rect x="72" y="9" width="3" height="3" fill="#8a8a8a"/><rect x="82" y="9" width="3" height="3" fill="#8a8a8a"/></svg>
<div class="a" style="left:1199px;top:383px;width:193px;height:1px;background:#3e3e3e;box-shadow:0 1px 0 #5c5c5c"></div>
<div class="btn" style="left:1204px;top:387px;width:110px;height:21px"></div>
<div class="pt" style="left:1212px;top:390px;color:#c8c8c8">正常</div>
<svg style="left:1303px;top:392px" width="6" height="11"><path d="M0 4L3 1L6 4ZM0 7L3 10L6 7Z" fill="#cfcfcf"/></svg>
<div class="pt" style="left:1322px;top:390px;color:#b8b8b8">不透明度:</div>
<div class="inp" style="left:1380px;top:388px;width:20px;height:20px"></div>
<div class="pt" style="left:1382px;top:391px;color:#707070">10</div>
<div class="a" style="left:1199px;top:411px;width:193px;height:1px;background:#3e3e3e;box-shadow:0 1px 0 #5c5c5c"></div>
<div class="pt" style="left:1205px;top:418px;color:#a8a8a8">统一:</div>
<svg style="left:1240px;top:417px" width="62" height="17"><g fill="none" stroke="#8a8a8a" stroke-width="1.3"><path d="M2 13L7 8M5 2L12 9L9 10L6 7Z" fill="#8a8a8a"/><rect x="8" y="11" width="4" height="4" rx="2"/><rect x="11" y="11" width="4" height="4" rx="2"/><ellipse cx="28" cy="6" rx="6" ry="4"/><circle cx="28" cy="6" r="1.8" fill="#8a8a8a"/><rect x="30" y="11" width="4" height="4" rx="2"/><rect x="33" y="11" width="4" height="4" rx="2"/><path d="M46 14C47 8 48 2 51 1M45 6H50M48 8L53 13M53 8L48 13"/><rect x="52" y="11" width="4" height="4" rx="2"/><rect x="55" y="11" width="4" height="4" rx="2"/></g></svg>
<div class="a" style="left:1367px;top:418px;width:15px;height:15px;border:1px solid #3a3a3a;border-radius:2px;background:#4a4a4a"></div>
<svg style="left:1369px;top:420px" width="12" height="11"><path d="M1 5L4.5 9L11 1" fill="none" stroke="#9a9a9a" stroke-width="1.8"/></svg>
<div class="pt" style="left:1385px;top:418px;color:#a8a8a8">传</div>
<div class="a" style="left:1199px;top:438px;width:193px;height:1px;background:#3e3e3e;box-shadow:0 1px 0 #5c5c5c"></div>
<div class="pt" style="left:1205px;top:445px;color:#a8a8a8">锁定:</div>
<div class="a" style="left:1243px;top:448px;width:12px;height:12px;background:conic-gradient(#6e6e6e 25%,#939393 0 50%,#6e6e6e 0 75%,#939393 0);background-size:6px 6px;background-color:#8a8a8a"></div>
<svg style="left:1262px;top:446px" width="80" height="16"><g fill="#8a8a8a"><path d="M17 1L19 3L9 11L7 9Z"/><path d="M1 15C2 11 4 9 7 10C8 13 5 15 1 15Z"/><path d="M31 1L34 4H32V7H35V5L38 8L35 11V9H32V12H34L31 15L28 12H30V9H27V11L24 8L27 5V7H30V4H28Z"/><rect x="47" y="7" width="11" height="8" rx="1"/><path d="M49 7V4A3.5 3.5 0 0 1 56 4V7" fill="none" stroke="#8a8a8a" stroke-width="1.6"/></g></svg>
<div class="pt" style="left:1345px;top:445px;color:#b8b8b8">填充:</div>
<div class="inp" style="left:1380px;top:443px;width:20px;height:20px"></div>
<div class="pt" style="left:1382px;top:446px;color:#707070">10</div>
<div class="a" style="left:1199px;top:465px;width:193px;height:2px;background:#3e3e3e"></div>
<div class="a" style="left:1199px;top:467px;width:193px;height:40px;background:#535353"></div>
<div class="a" style="left:1229px;top:467px;width:1px;height:40px;background:#3e3e3e"></div>
<div class="a" style="left:1230px;top:467px;width:162px;height:40px;background:#566374"></div>
<svg style="left:1206px;top:481px" width="17" height="12"><path d="M0.5 6C4 1 13 1 16.5 6C13 11 4 11 0.5 6Z" fill="#ddd"/><circle cx="8.5" cy="6" r="3.3" fill="#444"/><circle cx="8.5" cy="6" r="1.3" fill="#ddd"/></svg>
<div class="a" style="left:1233px;top:471px;width:25px;height:32px;background:#111;padding:1px">
<svg width="23" height="30" viewBox="0 0 23 30"><rect width="23" height="30" fill="#c8262a"/><path d="M3 14C2 8 6 4 12 4C18 4 21 8 21 13L20 20H4Z" fill="#1a1a1a"/><path d="M5 11C9 10 15 10 19 12L19 22C18 26 15 28 11.5 28C8 28 5 26 4.5 22L3.5 16Z" fill="#e6b4a0"/><path d="M5 17C7 15 9 15 10 16M13 16C15 15 17 15 19 17" stroke="#3a2a28" stroke-width="1.2" fill="none"/><circle cx="7.5" cy="17.5" r="1" fill="#5a6a70"/><circle cx="16" cy="17.5" r="1" fill="#5a6a70"/><path d="M11 19V22H13" stroke="#a07060" fill="none"/><ellipse cx="12" cy="24" rx="3" ry="1.2" fill="#e888a0"/><path d="M0 30V27C2 25 5 25 7 26L9 30ZM23 30V27C21 25 18 25 16 26L14 30Z" fill="#5e5a4a"/><path d="M7 26L9 30H14L16 26C14 28 9 28 7 26Z" fill="#eee"/></svg>
</div>
<div class="pt" style="left:1270px;top:481px;color:#fff;font-style:italic">背景</div>
<div class="a" style="left:1199px;top:507px;width:193px;height:1px;background:#3a3a3a"></div>
<div class="a" style="left:1199px;top:508px;width:193px;height:224px;background:#484848"></div>

<!-- ============ DIALOG ============ -->
<style>
.dl{position:absolute;white-space:nowrap;line-height:14px;color:#000;font-size:12px;text-align:right}
.dl u{text-decoration:underline;text-underline-offset:1px}
.win{position:absolute;background:#fff;border:1px solid #abadb3;border-top-color:#abadb3}
.sel{position:absolute;background:linear-gradient(#fefefe,#f9f9f9);border:1px solid #b4b4b4;border-radius:2px}
.dv{position:absolute;white-space:nowrap;line-height:14px;color:#000;font-size:12px}
.arr{position:absolute;width:0;height:0;border-left:4px solid transparent;border-right:4px solid transparent;border-top:5px solid #000}
.wb{position:absolute;border:1px solid #707070;border-radius:3px;background:linear-gradient(#f2f2f2 0,#ebebeb 50%,#dddddd 51%,#cfcfcf 100%);box-shadow:inset 0 0 0 1px #fcfcfc}
</style>
<!-- shadow -->
<div class="a" style="left:596px;top:296px;width:514px;height:404px;background:#000;filter:blur(5px);opacity:.55;border-radius:8px"></div>
<!-- frame -->
<div class="a" style="left:591px;top:291px;width:515px;height:404px;border-radius:7px;background:#0e0e0e"></div>
<div class="a" style="left:592px;top:292px;width:513px;height:402px;border-radius:6px;background:
linear-gradient(90deg,rgba(0,0,0,0) 0,rgba(0,0,0,0) 100%),
linear-gradient(#c4c2c6 0,#c0bec2 25%,#a89894 45%,#9a7e84 70%,#3a4250 82%,#2a3642 100%)"></div>
<!-- right frame overlay dark -->
<div class="a" style="left:1098px;top:292px;width:7px;height:402px;border-radius:0 6px 6px 0;background:linear-gradient(#8a9096 0,#a8acb0 20%,#c4c8cc 29%,#3a4652 30%,#2e3a46 100%)"></div>
<!-- bottom frame -->
<div class="a" style="left:592px;top:687px;width:513px;height:7px;border-radius:0 0 6px 6px;background:linear-gradient(90deg,#2c3846,#2a3440 60%,#2c3844)"></div>
<!-- title bar glass -->
<div class="a" style="left:593px;top:293px;width:511px;height:26px;border-radius:5px 5px 0 0;background:linear-gradient(90deg,#b6b2b6 0,#c8c4c8 30px,#c4c0c4 90px,#9a989c 98px,#4a4e56 108px,#30363e 125px,#30363e 150px,#6a3a46 156px,#7c3c4c 165px,#7a3a4a 196px,#2c323a 206px,#2a323c 300px,#3e464e 340px,#62686e 380px,#70767c 440px,#7a8086 511px)"></div>
<div class="a" style="left:592px;top:292px;width:513px;height:402px;border-radius:6px;border:1px solid rgba(255,255,255,.85)"></div>
<div class="t" style="left:599px;top:298px;color:#000;font-size:12px">新建</div>
<!-- close btn -->
<div class="a" style="left:1052px;top:292px;width:47px;height:19px;border-radius:0 0 4px 4px;border:1px solid #5a2018;border-top:none;background:linear-gradient(#e0a090 0,#d48474 40%,#c03a22 50%,#b8361e 70%,#d06448 100%);box-shadow:inset 0 0 0 1px rgba(255,255,255,.35),0 1px 0 rgba(255,255,255,.5)"></div>
<svg style="left:1069px;top:294px" width="15" height="13"><path d="M3.5 3.5L11.5 10M11.5 3.5L3.5 10" stroke="#3a4050" stroke-width="4.6" stroke-linecap="square"/><path d="M3.5 3.5L11.5 10M11.5 3.5L3.5 10" stroke="#fafafa" stroke-width="2.6" stroke-linecap="square"/></svg>
<!-- content -->
<div class="a" style="left:597px;top:318px;width:503px;height:371px;border:1px solid #c6cacf;background:#0f1418"></div>
<div class="a" style="left:598px;top:319px;width:501px;height:369px;background:#0c0c0c"></div>
<div class="a" style="left:599px;top:320px;width:499px;height:367px;background:#ececec;border-top:1px solid #fbfbfb;border-left:1px solid #fbfbfb"></div>
<!-- group box -->
<div class="a" style="left:611px;top:364px;width:350px;height:310px;border:1px solid #a0a0a0;box-shadow:inset 1px 1px 0 #fff,1px 1px 0 #fff"></div>
<div class="a" style="left:625px;top:360px;width:326px;height:10px;background:#ececec"></div>
<!-- name -->
<div class="dl" style="left:650px;width:85px;top:334px">名称(<u>N</u>):</div>
<div class="win" style="left:740px;top:331px;width:224px;height:21px;border-color:#5e9ad8 #a8c8ee #b4d2f2 #a8c8ee"></div>
<div class="a" style="left:744px;top:334px;width:50px;height:15px;background:#3399ff"></div>
<div class="dv" style="left:745px;top:335px;color:#fff">未标题-1</div>
<div class="a" style="left:793px;top:334px;width:1px;height:15px;background:#000"></div>
<!-- preset -->
<div class="dl" style="left:600px;width:91px;top:361px">预设(<u>P</u>):</div>
<div class="sel" style="left:695px;top:355px;width:249px;height:23px"></div>
<div class="dv" style="left:700px;top:361px">剪贴板</div>
<div class="arr" style="left:931px;top:365px"></div>
<!-- size -->
<div class="dl" style="left:650px;width:85px;top:391px;color:#8c8c8c">大小(<u>I</u>):</div>
<div class="a" style="left:740px;top:387px;width:198px;height:21px;border:1px solid #c0c0c0;border-radius:2px;background:linear-gradient(90deg,#ededed 0,#ededed 180px,#f6f6f6 180px)"></div>
<div class="arr" style="left:925px;top:396px;border-top-color:#a8a8a8"></div>
<!-- width -->
<div class="dl" style="left:650px;width:85px;top:421px">宽度(<u>W</u>):</div>
<div class="win" style="left:740px;top:419px;width:98px;height:19px;border-color:#e2e2e2 #e8e8e8 #d8dde4 #e8e8e8"></div>
<div class="dv" style="left:746px;top:421px">1355</div>
<div class="sel" style="left:843px;top:419px;width:95px;height:19px;border-color:#dedede"></div>
<div class="dv" style="left:849px;top:421px">像素</div>
<div class="arr" style="left:925px;top:428px"></div>
<!-- height -->
<div class="dl" style="left:650px;width:85px;top:451px">高度(<u>H</u>):</div>
<div class="win" style="left:740px;top:449px;width:98px;height:19px;border-color:#c8c8c8 #e8e8e8 #d8dde4 #e8e8e8"></div>
<div class="dv" style="left:746px;top:451px">714</div>
<div class="sel" style="left:843px;top:449px;width:95px;height:19px;border-color:#c8c8c8 #dedede #dedede"></div>
<div class="dv" style="left:849px;top:451px">像素</div>
<div class="arr" style="left:925px;top:457px"></div>
<!-- resolution -->
<div class="dl" style="left:640px;width:95px;top:482px">分辨率(<u>R</u>):</div>
<div class="win" style="left:740px;top:478px;width:98px;height:19px;border-color:#e8e8e8 #e8e8e8 #d8dde4 #e8e8e8"></div>
<div class="dv" style="left:746px;top:482px">95.987</div>
<div class="sel" style="left:843px;top:478px;width:95px;height:19px;border-color:#dedede"></div>
<div class="dv" style="left:849px;top:482px">像素/英寸</div>
<div class="arr" style="left:925px;top:487px"></div>
<!-- color mode -->
<div class="dl" style="left:620px;width:115px;top:512px">颜色模式(<u>M</u>):</div>
<div class="sel" style="left:741px;top:507px;width:93px;height:22px;border-color:#c8c8c8"></div>
<div class="dv" style="left:747px;top:512px">RGB 颜色</div>
<div class="arr" style="left:821px;top:517px"></div>
<div class="sel" style="left:843px;top:507px;width:95px;height:22px;border-color:#c8c8c8"></div>
<div class="dv" style="left:849px;top:512px">8 位</div>
<div class="arr" style="left:925px;top:517px"></div>
<!-- bg content -->
<div class="dl" style="left:620px;width:115px;top:542px">背景内容(<u>C</u>):</div>
<div class="sel" style="left:741px;top:537px;width:197px;height:22px;border-color:#c8c8c8"></div>
<div class="dv" style="left:747px;top:542px">透明</div>
<div class="arr" style="left:925px;top:547px"></div>
<!-- advanced -->
<div class="a" style="left:631px;top:579px;width:16px;height:16px;border-radius:50%;border:1px solid #a8a8a8;background:radial-gradient(circle at 50% 35%,#fff,#e4e4e4)"></div>
<svg style="left:635px;top:582px" width="8" height="9"><path d="M1 4L4 1L7 4M1 8L4 5L7 8" stroke="#000" stroke-width="1.5" fill="none"/></svg>
<div class="dv" style="left:652px;top:580px">高级</div>
<div class="a" style="left:683px;top:587px;width:246px;height:1px;background:#a8a8a8;box-shadow:0 1px 0 #fff"></div>
<!-- profile -->
<div class="dl" style="left:600px;width:135px;top:619px">颜色配置文件(<u>O</u>):</div>
<div class="sel" style="left:741px;top:615px;width:197px;height:22px;border-color:#c8c8c8"></div>
<div class="dv" style="left:747px;top:619px">工作中的 RGB: sRGB IEC6196...</div>
<div class="arr" style="left:925px;top:624px"></div>
<!-- aspect -->
<div class="dl" style="left:600px;width:135px;top:650px">像素长宽比(<u>X</u>):</div>
<div class="sel" style="left:741px;top:645px;width:197px;height:22px;border-color:#c8c8c8"></div>
<div class="dv" style="left:747px;top:650px">方形像素</div>
<div class="arr" style="left:925px;top:655px"></div>
<!-- buttons -->
<div class="wb" style="left:980px;top:332px;width:107px;height:18px;border-color:#3c7fb1;background:linear-gradient(#eaf6fd 0,#d9f0fc 50%,#bee6fd 51%,#a7d9f5 100%);box-shadow:inset 0 0 0 1px #5dc4f0"></div>
<div class="dv" style="left:1020px;top:335px">确定</div>
<div class="wb" style="left:980px;top:360px;width:107px;height:18px"></div>
<div class="dv" style="left:1020px;top:363px">复位</div>
<div class="wb" style="left:980px;top:388px;width:107px;height:18px"></div>
<div class="dv" style="left:994px;top:391px">存储预设(<u>S</u>)...</div>
<div class="wb" style="left:980px;top:416px;width:107px;height:18px;border-color:#adb2b5;background:#f4f4f4;box-shadow:none"></div>
<div class="dv" style="left:994px;top:419px;color:#838383">删除预设(<u>D</u>)...</div>
<div class="dv" style="left:1006px;top:553px">图像大小:</div>
<div class="dv" style="left:1016px;top:576px">2.77M</div>
<!-- red box -->
<div class="a" style="left:660px;top:412px;width:294px;height:69px;border:7px solid #fc3434"></div>
</body></html>
